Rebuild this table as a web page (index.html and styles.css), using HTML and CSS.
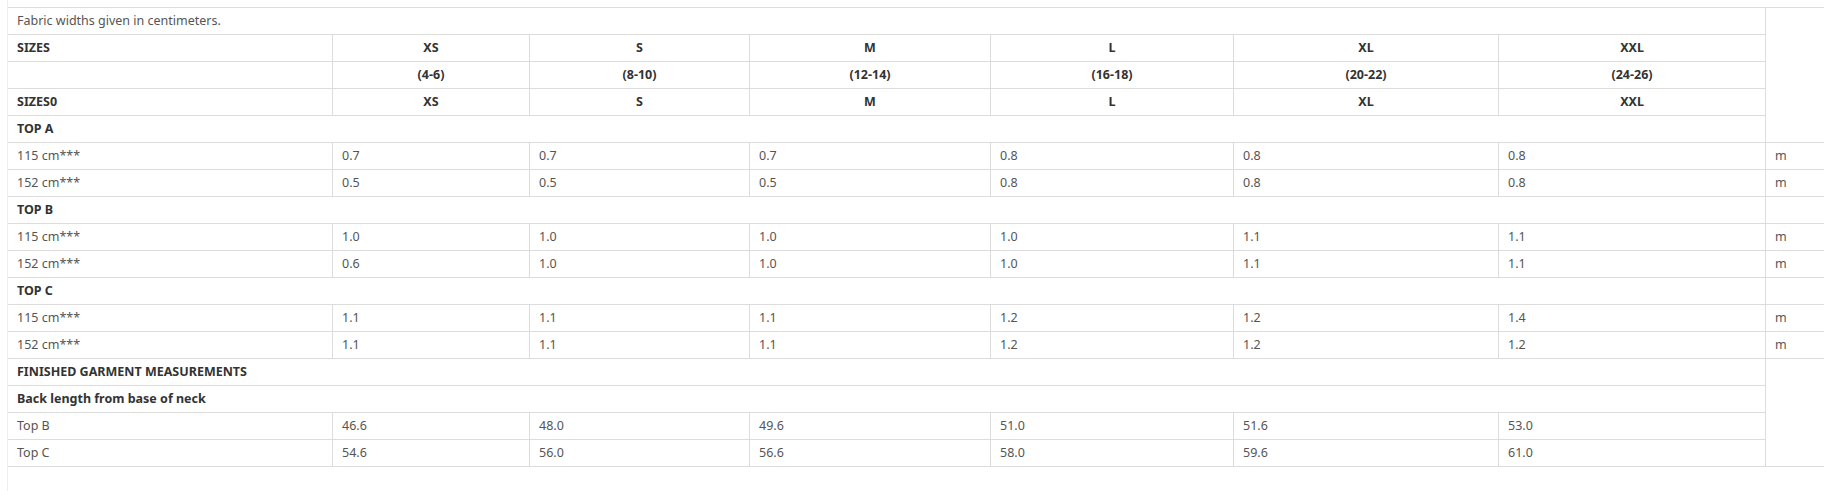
FILE: index.html
```html
<!DOCTYPE html>
<html lang="en">
<head>
<meta charset="utf-8">
<title>Fabric requirements</title>
<link rel="stylesheet" href="styles.css">
</head>
<body>
<div class="wrap">
<table class="chart">
  <colgroup>
    <col class="c-label">
    <col class="c-xs">
    <col class="c-s">
    <col class="c-m">
    <col class="c-l">
    <col class="c-xl">
    <col class="c-xxl">
    <col class="c-unit">
  </colgroup>
  <tbody>
    <tr><td colspan="7">Fabric widths given in centimeters.</td></tr>
    <tr class="head"><td>SIZES</td><td>XS</td><td>S</td><td>M</td><td>L</td><td>XL</td><td>XXL</td></tr>
    <tr class="head"><td></td><td>(4-6)</td><td>(8-10)</td><td>(12-14)</td><td>(16-18)</td><td>(20-22)</td><td>(24-26)</td></tr>
    <tr class="head"><td>SIZES0</td><td>XS</td><td>S</td><td>M</td><td>L</td><td>XL</td><td>XXL</td></tr>
    <tr class="section"><td colspan="7">TOP A</td></tr>
    <tr><td>115 cm***</td><td>0.7</td><td>0.7</td><td>0.7</td><td>0.8</td><td>0.8</td><td>0.8</td><td>m</td></tr>
    <tr><td>152 cm***</td><td>0.5</td><td>0.5</td><td>0.5</td><td>0.8</td><td>0.8</td><td>0.8</td><td>m</td></tr>
    <tr class="section"><td colspan="7">TOP B</td></tr>
    <tr><td>115 cm***</td><td>1.0</td><td>1.0</td><td>1.0</td><td>1.0</td><td>1.1</td><td>1.1</td><td>m</td></tr>
    <tr><td>152 cm***</td><td>0.6</td><td>1.0</td><td>1.0</td><td>1.0</td><td>1.1</td><td>1.1</td><td>m</td></tr>
    <tr class="section"><td colspan="7">TOP C</td></tr>
    <tr><td>115 cm***</td><td>1.1</td><td>1.1</td><td>1.1</td><td>1.2</td><td>1.2</td><td>1.4</td><td>m</td></tr>
    <tr><td>152 cm***</td><td>1.1</td><td>1.1</td><td>1.1</td><td>1.2</td><td>1.2</td><td>1.2</td><td>m</td></tr>
    <tr class="section"><td colspan="7">FINISHED GARMENT MEASUREMENTS</td></tr>
    <tr class="section"><td colspan="7">Back length from base of neck</td></tr>
    <tr><td>Top B</td><td>46.6</td><td>48.0</td><td>49.6</td><td>51.0</td><td>51.6</td><td>53.0</td></tr>
    <tr><td>Top C</td><td>54.6</td><td>56.0</td><td>56.6</td><td>58.0</td><td>59.6</td><td>61.0</td></tr>
  </tbody>
</table>
</div>
</body>
</html>
```
FILE: styles.css
```css
html, body {
  margin: 0;
  padding: 0;
  background: #ffffff;
}

body {
  font-family: "Noto Sans", "Open Sans", sans-serif;
  font-size: 12.5px;
  color: #555555;
  overflow: hidden;
}

.wrap {
  margin-left: 7px;
  padding-top: 7px;
  min-height: 100vh;
  box-sizing: border-box;
  border-left: 1px solid #eeeeee;
  overflow: hidden;
}

.chart {
  margin-left: -1px;
  border-collapse: collapse;
  table-layout: fixed;
  width: 1830px;
  border-top: 1px solid #dcdcdc;
  border-bottom: 1px solid #dcdcdc;
}

.c-label { width: 325px; }
.c-xs { width: 197px; }
.c-s { width: 220px; }
.c-m { width: 241px; }
.c-l { width: 243px; }
.c-xl { width: 265px; }
.c-xxl { width: 267px; }
.c-unit { width: 72px; }

.chart td {
  border: 1px solid #dcdcdc;
  padding: 5px 9px;
  line-height: 16px;
  height: 16px;
  text-align: left;
  vertical-align: middle;
  white-space: nowrap;
}

.head td {
  font-weight: 700;
  color: #333333;
  text-align: center;
}

.head td:first-child {
  text-align: left;
}

.section td {
  font-weight: 700;
  color: #333333;
}
```
